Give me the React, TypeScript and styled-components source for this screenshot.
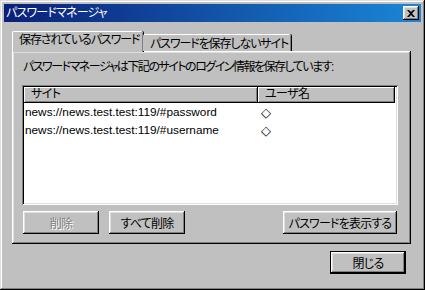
import React from "react";
import styled, { createGlobalStyle } from "styled-components";

const Global = createGlobalStyle`
  html, body { margin: 0; padding: 0; background: #c0c0c0; }
  * { box-sizing: border-box; }
  body {
    font-family: "Liberation Sans", "Noto Sans CJK JP", sans-serif;
    font-size: 12px;
    font-feature-settings: "palt";
    color: #000;
  }
`;

const Window = styled.div`
  width: 425px;
  height: 290px;
  background: #c0c0c0;
  padding: 4px;
  display: flex;
  flex-direction: column;
  box-shadow: inset -1px -1px #000, inset 1px 1px #dfdfdf,
    inset -2px -2px #808080, inset 2px 2px #fff;
`;

const TitleBar = styled.div`
  height: 18px;
  display: flex;
  align-items: center;
  justify-content: space-between;
  padding: 0 2px 0 2px;
  background: linear-gradient(to right, #0a1f78, #1a86d6);
`;

const Title = styled.span`
  color: #fff;
  font-size: 12px;
  line-height: 18px;
  letter-spacing: -0.8px;
`;

const CloseButton = styled.div`
  width: 16px;
  height: 14px;
  background: #c0c0c0;
  display: flex;
  align-items: center;
  justify-content: center;
  box-shadow: inset -1px -1px #000, inset 1px 1px #fff,
    inset -2px -2px #808080, inset 2px 2px #dfdfdf;
`;

const Body = styled.div`
  flex: 1;
  display: flex;
  flex-direction: column;
  padding: 9px 10px 0 8px;
`;

const TabStrip = styled.div`
  display: flex;
  align-items: flex-end;
  height: 20px;
  position: relative;
  z-index: 1;
`;

const Tab = styled.div<{ $active?: boolean; $w: number }>`
  width: ${(p) => p.$w}px;
  height: ${(p) => (p.$active ? 21 : 17)}px;
  margin-bottom: ${(p) => (p.$active ? -1 : 0)}px;
  background: #c0c0c0;
  display: flex;
  align-items: ${(p) => (p.$active ? "flex-start" : "center")};
  padding: ${(p) => (p.$active ? "1px 0 0 6px" : "1px 0 0 6px")};
  line-height: 14px;
  white-space: nowrap;
  overflow: hidden;
  letter-spacing: -1.1px;
  border-top: 1px solid #fff;
  border-left: 1px solid ${(p) => (p.$active ? "#fff" : "transparent")};
  box-shadow: inset -1px 0 #808080, 1px 0 #000;
  border-top-left-radius: 2px;
  border-top-right-radius: 2px;
`;

const Panel = styled.div`
  height: 193px;
  display: flex;
  flex-direction: column;
  padding: 9px 0 0 10px;
  box-shadow: inset -1px -1px #000, inset 1px 1px #fff,
    inset -2px -2px #808080, inset 2px 2px #dfdfdf;
`;

const Label = styled.div`
  line-height: 14px;
  padding-left: 1px;
  letter-spacing: -1.5px;
  white-space: nowrap;
`;

const ListBox = styled.div`
  margin-top: 11px;
  width: 376px;
  height: 120px;
  background: #fff;
  padding: 2px;
  box-shadow: inset 1px 1px #808080, inset -1px -1px #fff,
    inset 2px 2px #000, inset -2px -2px #dfdfdf;
`;

const HeaderRow = styled.div`
  display: flex;
  height: 16px;
`;

const HeaderCell = styled.div<{ $w: number }>`
  width: ${(p) => p.$w}px;
  background: #c0c0c0;
  padding-left: 7px;
  line-height: 15px;
  letter-spacing: -0.6px;
  box-shadow: inset -1px -1px #000, inset 1px 1px #fff,
    inset -2px -2px #808080;
`;

const Row = styled.div`
  display: flex;
  height: 18px;
  align-items: center;
`;

const Cell = styled.div<{ $w: number }>`
  width: ${(p) => p.$w}px;
  padding-left: ${(p) => (p.$w > 200 ? 1 : 3)}px;
  font-size: 11.8px;
  white-space: nowrap;
`;

const Diamond = styled.span`
  font-family: "DejaVu Sans", sans-serif;
  font-size: 13px;
  color: #000;
`;

const ButtonRow = styled.div`
  display: flex;
  margin-top: 6px;
  padding-left: 1px;
  width: 375px;
  gap: 10px;
`;

const Spacer = styled.div`
  flex: 1;
`;

const Button = styled.button<{ $w: number; $disabled?: boolean; $default?: boolean }>`
  width: ${(p) => p.$w}px;
  height: 23px;
  margin: 0;
  padding: 0;
  border: none;
  background: #c0c0c0;
  font: inherit;
  font-size: 12px;
  letter-spacing: -0.8px;
  color: ${(p) => (p.$disabled ? "#808080" : "#000")};
  text-shadow: ${(p) => (p.$disabled ? "1px 1px #fff" : "none")};
  box-shadow: ${(p) =>
    p.$default
      ? "inset 0 0 0 1px #000, inset -2px -2px #000, inset 2px 2px #fff, inset -3px -3px #808080, inset 3px 3px #dfdfdf"
      : "inset -1px -1px #000, inset 1px 1px #fff, inset -2px -2px #808080, inset 2px 2px #dfdfdf"};
`;

const Footer = styled.div`
  display: flex;
  justify-content: flex-end;
  margin-top: 7px;
  padding-right: 5px;
`;

const CloseIcon = () => (
  <svg width="8" height="7" viewBox="0 0 8 7">
    <path d="M0 0h2l2 2 2-2h2L5 3.5 8 7H6L4 5 2 7H0l3-3.5z" fill="#000" />
  </svg>
);

export default function App() {
  return (
    <>
      <Global />
      <Window>
        <TitleBar>
          <Title>パスワードマネージャ</Title>
          <CloseButton>
            <CloseIcon />
          </CloseButton>
        </TitleBar>
        <Body>
          <TabStrip>
            <Tab $active $w={131}>保存されているパスワード</Tab>
            <Tab $w={148}>パスワードを保存しないサイト</Tab>
          </TabStrip>
          <Panel>
            <Label>パスワードマネージャは下記のサイトのログイン情報を保存しています:</Label>
            <ListBox>
              <HeaderRow>
                <HeaderCell $w={234}>サイト</HeaderCell>
                <HeaderCell $w={137}>ユーザ名</HeaderCell>
              </HeaderRow>
              <Row>
                <Cell $w={234}>news://news.test.test:119/#password</Cell>
                <Cell $w={137}><Diamond>◇</Diamond></Cell>
              </Row>
              <Row>
                <Cell $w={234}>news://news.test.test:119/#username</Cell>
                <Cell $w={137}><Diamond>◇</Diamond></Cell>
              </Row>
            </ListBox>
            <ButtonRow>
              <Button $w={76} $disabled>削除</Button>
              <Button $w={76}>すべて削除</Button>
              <Spacer />
              <Button $w={114}>パスワードを表示する</Button>
            </ButtonRow>
          </Panel>
          <Footer>
            <Button $w={76} $default>閉じる</Button>
          </Footer>
        </Body>
      </Window>
    </>
  );
}
